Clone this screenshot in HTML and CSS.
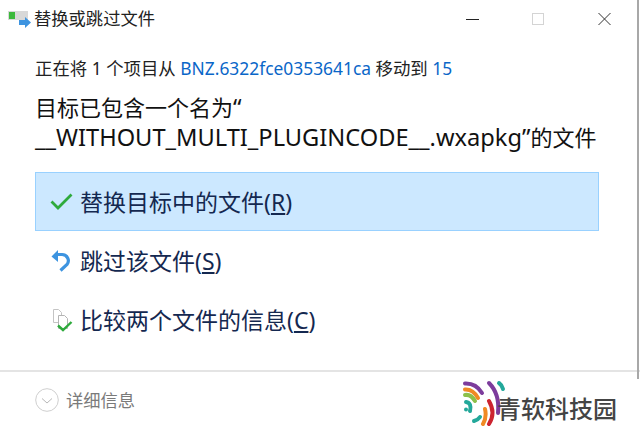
FILE: index.html
```html
<!DOCTYPE html>
<html lang="zh-CN">
<head>
  <meta charset="UTF-8">
  <title>替换或跳过文件</title>
  <link rel="stylesheet" href="styles.css">
</head>
<body>
  <div class="dialog">
    <div class="titlebar">
      <svg class="app-icon" width="26" height="20" viewBox="0 0 26 20">
        <rect x="0" y="2" width="20" height="9" fill="#d8d8d8"/>
        <rect x="1" y="3" width="6" height="7" fill="#3cb93c"/>
        <path d="M11 11h6V8l6 5.500L17 19v-3h-6z" fill="#3d94e0"/>
      </svg>
      <span class="title">替换或跳过文件</span>
      <div class="window-buttons">
        <svg width="13" height="14" viewBox="0 0 13 14"><path d="M0 7.500h13" stroke="#222" fill="none"/></svg>
        <svg width="13" height="14" viewBox="0 0 13 14"><rect x=".5" y="1.500" width="11" height="11" stroke="#d4d4d4" fill="none"/></svg>
        <svg width="13" height="14" viewBox="0 0 13 14"><path d="M.5 1l12 12M12.500 1L.5 13" stroke="#333" fill="none"/></svg>
      </div>
    </div>

    <div class="content">
      <p class="status">正在将 1 个项目从 <a class="link">BNZ.6322fce0353641ca</a> 移动到 <a class="link">15</a></p>
      <h1 class="heading">目标已包含一个名为<span class="latin">“</span><br><span class="latin">__WITHOUT_MULTI_PLUGINCODE__.wxapkg”</span>的文件</h1>

      <div class="options">
        <div class="option selected">
          <svg width="24" height="18" viewBox="0 0 24 18"><path d="M1.500 8.500L8 15 21.500 1.500" stroke="#2eaa3c" stroke-width="2.800" fill="none"/></svg>
          <span>替换目标中的文件(<u>R</u>)</span>
        </div>
        <div class="option">
          <svg width="24" height="22" viewBox="0 0 24 22">
            <path d="M6 4.500h6a6.200 6.200 0 0 1 5 10L10.500 20.500" stroke="#3d94e0" stroke-width="3.200" fill="none"/>
            <path d="M1.500 6.500L8 0v12z" fill="#3d94e0"/>
          </svg>
          <span>跳过该文件(<u>S</u>)</span>
        </div>
        <div class="option">
          <svg width="24" height="24" viewBox="0 0 24 24">
            <path d="M3.500 1.500h5l3 3v10h-8z" fill="#fff" stroke="#c4c4c4"/>
            <path d="M8.500 7.500h6l3 3v10h-9z" fill="#fff" stroke="#b4b4b4"/>
            <path d="M8 17.500l5 4.500 8.500-8" stroke="#2eaa3c" stroke-width="2.400" fill="none"/>
          </svg>
          <span>比较两个文件的信息(<u>C</u>)</span>
        </div>
      </div>
    </div>

    <div class="footer">
      <svg width="24" height="24" viewBox="0 0 24 24">
        <circle cx="12" cy="12" r="11.300" fill="#fff" stroke="#cfcfcf"/>
        <path d="M7 10.500l5 4.500 5-4.500" fill="none" stroke="#b8b8b8"/>
      </svg>
      <span class="details">详细信息</span>
      <div class="brand">
        <svg class="brand-logo" width="46" height="46" viewBox="0 0 46 46" fill="none" stroke-width="4" stroke-linecap="round">
          <path d="M3 3.500Q14 3 20 13" stroke="#7d3c9c"/>
          <path d="M3 9.500Q11 9 16 18" stroke="#f08a24"/>
          <path d="M3 15Q9 14 13 21" stroke="#8cc04a"/>
          <path d="M4 22Q10 23 8 31" stroke="#23a89a"/>
          <path d="M4 29.500v.1" stroke="#23a89a"/>
          <path d="M12 41Q16 40 18 37" stroke="#23a89a"/>
          <path d="M37 3Q40 5 41 9" stroke="#23a89a"/>
          <path d="M27 3Q38 14 36 33" stroke="#7d3c9c"/>
          <path d="M27 21Q34 33 27 44" stroke="#cc2430"/>
          <path d="M23 29Q25 37 21 44" stroke="#f08a24"/>
        </svg>
        <span class="brand-name">青软科技园</span>
      </div>
    </div>
  </div>
</body>
</html>
```

FILE: styles.css
```css
* {
  margin: 0;
  padding: 0;
  box-sizing: border-box;
}

body {
  font-family: "Noto Sans", "Noto Sans CJK SC", sans-serif;
  background: #fff;
  color: #1a1a1a;
  width: 640px;
  height: 429px;
  overflow: hidden;
}

.dialog {
  width: 640px;
  height: 429px;
  display: flex;
  flex-direction: column;
}

.titlebar {
  height: 38px;
  display: flex;
  align-items: center;
  padding-left: 8px;
  margin-right: 1px;
  border-right: 2px solid #a8a8a8;
}

.title {
  font-size: 17.300px;
  color: #222;
  margin-bottom: 3px;
}

.window-buttons {
  margin-left: auto;
  margin-right: 26px;
  display: flex;
  gap: 53px;
}

.content {
  height: 332px;
  padding: 19px 0 0 35px;
  margin-right: 1px;
  border-right: 2px solid #a8a8a8;
}

.status {
  font-size: 17.400px;
  line-height: 22px;
  color: #222;
}

.link {
  color: #0a66c8;
}

.heading {
  font-size: 22px;
  font-weight: 400;
  line-height: 30px;
  margin-top: 13px;
  color: #111;
  white-space: nowrap;
}

.latin {
  font-size: 23.650px;
  line-height: 30px;
}

.options {
  margin-top: 20px;
  width: 564px;
  display: flex;
  flex-direction: column;
}

.option {
  height: 59px;
  display: flex;
  align-items: center;
  padding-left: 15px;
  font-size: 23px;
  line-height: 30px;
  color: #142850;
}

.option svg {
  margin-right: 6px;
}

.option.selected {
  background: #cce8ff;
  border: 1px solid #99d1ff;
  padding-left: 14px;
}

.footer {
  flex: 1;
  position: relative;
  border-top: 2px solid #e4e4e4;
  display: flex;
  align-items: center;
  padding: 0 0 2px 35px;
}

/* window edge runs a few px past the separator */
.footer::after {
  content: '';
  position: absolute;
  top: -2px;
  right: 1px;
  width: 2px;
  height: 9px;
  background: #a8a8a8;
}

.details {
  margin-left: 7px;
  font-size: 17.300px;
  color: #7a7a7a;
}

.brand {
  margin-left: auto;
  margin-right: 23px;
  display: flex;
  align-items: flex-end;
  margin-top: 6px;
}

.brand-name {
  font-size: 24px;
  font-weight: 500;
  line-height: 34px;
  color: #444;
  margin-left: -11px;
}
```
